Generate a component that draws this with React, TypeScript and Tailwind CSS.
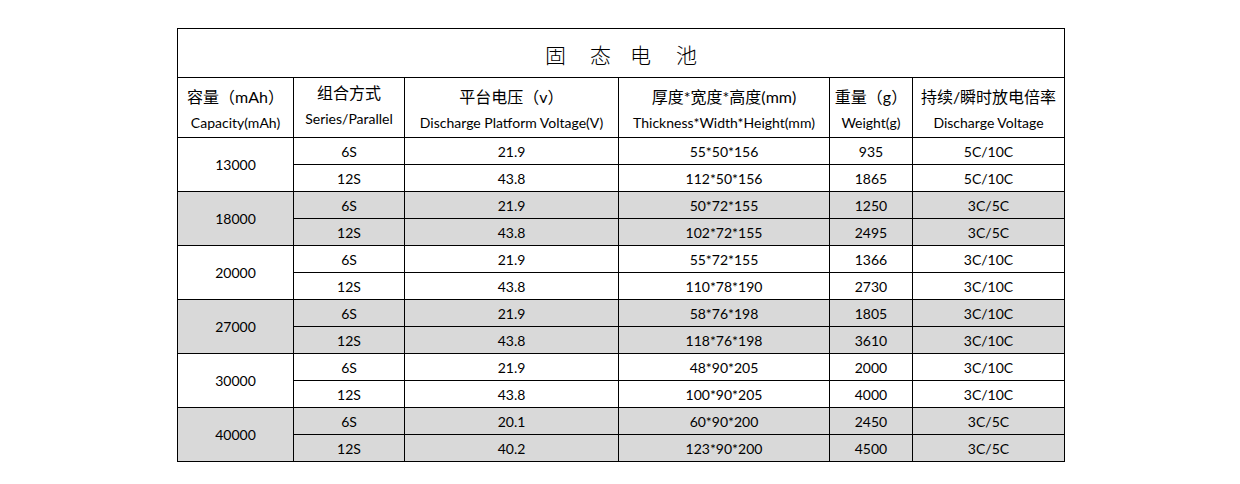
type Row = {
  cap: string;
  shade: boolean;
  items: { series: string; volt: string; size: string; weight: string; rate: string }[];
};

const rows: Row[] = [
  {
    cap: "13000",
    shade: false,
    items: [
      { series: "6S", volt: "21.9", size: "55*50*156", weight: "935", rate: "5C/10C" },
      { series: "12S", volt: "43.8", size: "112*50*156", weight: "1865", rate: "5C/10C" },
    ],
  },
  {
    cap: "18000",
    shade: true,
    items: [
      { series: "6S", volt: "21.9", size: "50*72*155", weight: "1250", rate: "3C/5C" },
      { series: "12S", volt: "43.8", size: "102*72*155", weight: "2495", rate: "3C/5C" },
    ],
  },
  {
    cap: "20000",
    shade: false,
    items: [
      { series: "6S", volt: "21.9", size: "55*72*155", weight: "1366", rate: "3C/10C" },
      { series: "12S", volt: "43.8", size: "110*78*190", weight: "2730", rate: "3C/10C" },
    ],
  },
  {
    cap: "27000",
    shade: true,
    items: [
      { series: "6S", volt: "21.9", size: "58*76*198", weight: "1805", rate: "3C/10C" },
      { series: "12S", volt: "43.8", size: "118*76*198", weight: "3610", rate: "3C/10C" },
    ],
  },
  {
    cap: "30000",
    shade: false,
    items: [
      { series: "6S", volt: "21.9", size: "48*90*205", weight: "2000", rate: "3C/10C" },
      { series: "12S", volt: "43.8", size: "100*90*205", weight: "4000", rate: "3C/10C" },
    ],
  },
  {
    cap: "40000",
    shade: true,
    items: [
      { series: "6S", volt: "20.1", size: "60*90*200", weight: "2450", rate: "3C/5C" },
      { series: "12S", volt: "40.2", size: "123*90*200", weight: "4500", rate: "3C/5C" },
    ],
  },
];

const cell = "border border-black text-center align-middle p-0";

function HeadCell({ zh, en, lift }: { zh: string; en: string; lift?: boolean }) {
  return (
    <th className={cell + " font-normal"}>
      <div className={"flex flex-col items-center " + (lift ? "-mt-1" : "pt-1")}>
        <div className="text-[16px] leading-[26px]">{zh}</div>
        <div className="text-[14px] leading-[26px]">{en}</div>
      </div>
    </th>
  );
}

export default function App() {
  return (
    <div className="w-[1240px] h-[484px] bg-white pt-[28px] pl-[177px] text-black font-['Lato','Noto_Sans_CJK_SC',sans-serif]">
      <table className="w-[887px] border-collapse table-fixed">
        <colgroup>
          <col className="w-[116px]" />
          <col className="w-[111px]" />
          <col className="w-[214px]" />
          <col className="w-[211px]" />
          <col className="w-[83px]" />
          <col className="w-[152px]" />
        </colgroup>
        <tbody>
          <tr className="h-[49px]">
            <td colSpan={6} className={cell}>
              <div className="flex justify-center pt-1 text-[21px] font-light font-['Noto_Sans_CJK_SC',sans-serif]">
                <span className="mr-[24px]">固</span>
                <span className="mr-[19px]">态</span>
                <span className="mr-[25px]">电</span>
                <span>池</span>
              </div>
            </td>
          </tr>
          <tr className="h-[60px]">
            <HeadCell zh="容量（mAh）" en="Capacity(mAh)" />
            <HeadCell zh="组合方式" en="Series/Parallel" lift />
            <HeadCell zh="平台电压（v）" en="Discharge Platform Voltage(V)" />
            <HeadCell zh="厚度*宽度*高度(mm)" en="Thickness*Width*Height(mm)" />
            <HeadCell zh="重量（g）" en="Weight(g)" />
            <HeadCell zh="持续/瞬时放电倍率" en="Discharge Voltage" />
          </tr>
          {rows.map((r) =>
            r.items.map((it, i) => (
              <tr key={r.cap + i} className={"h-[27px] text-[14px] " + (r.shade ? "bg-[#d9d9d9]" : "")}>
                {i === 0 && (
                  <td rowSpan={2} className={cell}>
                    {r.cap}
                  </td>
                )}
                <td className={cell}>{it.series}</td>
                <td className={cell}>{it.volt}</td>
                <td className={cell}>{it.size}</td>
                <td className={cell}>{it.weight}</td>
                <td className={cell}>{it.rate}</td>
              </tr>
            ))
          )}
        </tbody>
      </table>
    </div>
  );
}
